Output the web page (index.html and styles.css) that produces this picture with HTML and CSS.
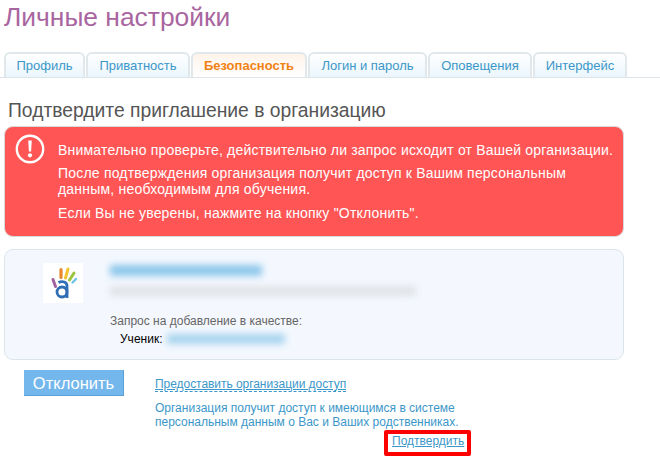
FILE: index.html
```html
<!DOCTYPE html>
<html lang="ru">
<head>
<meta charset="utf-8">
<title>Личные настройки</title>
<link rel="stylesheet" href="styles.css">
</head>
<body>
<h1 class="title">Личные настройки</h1>
<nav class="tabs">
  <a class="tab tab-1">Профиль</a>
  <a class="tab tab-2">Приватность</a>
  <a class="tab tab-3 active">Безопасность</a>
  <a class="tab tab-4">Логин и пароль</a>
  <a class="tab tab-5">Оповещения</a>
  <a class="tab tab-6">Интерфейс</a>
</nav>
<h2 class="heading">Подтвердите приглашение в организацию</h2>
<section class="alert">
  <svg class="alert-icon" width="30" height="30" viewBox="0 0 30 30">
    <circle cx="15" cy="15" r="13.2" fill="none" stroke="#fff" stroke-width="2.4"/>
    <path d="M13.2 6.5h3.6l-.7 11h-2.2z" fill="#fff"/>
    <circle cx="15" cy="21.3" r="2.1" fill="#fff"/>
  </svg>
  <div class="alert-text">
    <p>Внимательно проверьте, действительно ли запрос исходит от Вашей организации.</p>
    <p>После подтверждения организация получит доступ к Вашим персональным<br>данным, необходимым для обучения.</p>
    <p>Если Вы не уверены, нажмите на кнопку "Отклонить".</p>
  </div>
</section>
<section class="card">
  <div class="logo">
    <svg width="40" height="40" viewBox="0 0 40 40">
      <g fill="none" stroke-linecap="round">
        <path d="M10 16.500l2.500 7" stroke="#a1639f" stroke-width="3"/>
        <path d="M18 6.500v8" stroke="#e8882c" stroke-width="3.200"/>
        <path d="M25 6l-2.500 9" stroke="#f2c530" stroke-width="3"/>
        <path d="M31 10l-4.500 7" stroke="#9cc23e" stroke-width="3"/>
        <path d="M33 16l-3.500 3.500" stroke="#6ec1e8" stroke-width="2.400"/>
      </g>
      <g fill="none" stroke="#2f6db5" stroke-width="2.800">
        <circle cx="19" cy="29" r="5"/>
        <path d="M15.500 19.500c4-2 8.500-.5 8.500 3.500v12"/>
      </g>
    </svg>
  </div>
  <div class="card-body">
    <div class="blur blur-name"></div>
    <div class="blur blur-desc"></div>
    <div class="request">Запрос на добавление в качестве:</div>
    <div class="role"><span>Ученик:</span><div class="blur blur-role"></div></div>
  </div>
</section>
<section class="actions">
  <button class="decline">Отклонить</button>
  <div class="grant">
    <a class="grant-link">Предоставить организации доступ</a>
    <p class="grant-text">Организация получит доступ к имеющимся в системе персональным данным о Вас и Ваших родственниках.</p>
    <div class="confirm-row"><span class="highlight"><a class="confirm">Подтвердить</a></span></div>
  </div>
</section>
</body>
</html>
```

FILE: styles.css
```css
* { box-sizing: border-box; }
html, body { margin: 0; padding: 0; }
body {
  width: 660px;
  height: 471px;
  overflow: hidden;
  background: #fff;
  font-family: "Liberation Sans", Arial, sans-serif;
}
.title {
  margin: 0;
  padding: 0 0 0 4px;
  height: 52px;
  font-size: 26.4px;
  line-height: 34px;
  font-weight: normal;
  color: #a9659f;
}
.tabs {
  display: flex;
  gap: 1px;
  padding-left: 4px;
  height: 26px;
  border-bottom: 1px solid #dde5ea;
}
.tab {
  height: 25px;
  border: 2px solid #e1e8ec;
  border-bottom: 0;
  border-radius: 6px 6px 0 0;
  background: linear-gradient(#fff, #eaf6fc);
  font-size: 13px;
  line-height: 24px;
  text-align: center;
  color: #3b97c9;
}
.tab-1 { width: 81px; }
.tab-2 { width: 104px; }
.tab-3 { width: 116px; }
.tab-4 { width: 119px; }
.tab-5 { width: 104px; }
.tab-6 { width: 94px; }
.active {
  background: linear-gradient(#fff3ea, #fff);
  color: #f08214;
  font-weight: bold;
}
.heading {
  margin: 0;
  padding: 20px 0 0 8px;
  height: 48px;
  font-size: 19.3px;
  line-height: 26px;
  font-weight: normal;
  color: #555;
}
.alert {
  display: flex;
  width: 620px;
  height: 111px;
  margin-left: 4px;
  background: #ff5555;
  border: 1px solid #d9d9d9;
  border-radius: 9px;
}
.alert-icon {
  flex: none;
  margin: 7px 0 0 10px;
}
.alert-text {
  padding: 15px 0 0 13px;
  width: 575px;
  font-size: 14px;
  line-height: 16px;
  letter-spacing: .2px;
  color: #fff;
}
.alert-text p { margin: 0 0 7px; }
.alert-text p:last-child { margin-top: 8px; }
.card {
  display: flex;
  width: 620px;
  height: 111px;
  margin: 12px 0 0 4px;
  background: #f4f8fe;
  border: 1px solid #dbe5ea;
  border-radius: 9px;
}
.logo {
  flex: none;
  width: 40px;
  height: 40px;
  margin: 13px 0 0 38px;
  background: #fff;
}
.logo svg { display: block; }
.card-body {
  padding: 15px 0 0 27px;
  font-size: 12px;
}
.blur { filter: blur(3.5px); }
.blur-name {
  width: 152px;
  height: 11px;
  background: #8cc6ea;
}
.blur-desc {
  width: 306px;
  height: 10px;
  margin-top: 10px;
  background: #e0e3e7;
}
.request {
  margin-top: 18px;
  line-height: 14px;
  color: #666;
}
.role {
  display: flex;
  align-items: center;
  gap: 5px;
  margin: 4px 0 0 10px;
  line-height: 14px;
  color: #000;
}
.blur-role {
  width: 118px;
  height: 10px;
  background: #a6d3ee;
}
.actions {
  display: flex;
  padding: 10px 0 0 24px;
}
.decline {
  flex: none;
  width: 100px;
  height: 26px;
  padding: 0;
  background: #74b7ec;
  border: 0;
  border-right: 1px solid #5d9fd3;
  border-bottom: 1px solid #5d9fd3;
  font-family: inherit;
  font-size: 16.5px;
  line-height: 24px;
  color: #fff;
}
.grant {
  width: 316px;
  margin-left: 31px;
  padding-top: 7px;
  font-size: 12px;
  line-height: 14px;
  color: #3b97c9;
}
.grant-link {
  display: inline-block;
  border-bottom: 1px dashed #3b97c9;
  line-height: 13px;
  letter-spacing: -.05px;
  text-decoration: underline;
}
.grant-text {
  margin: 9px 0 0;
  width: 304px;
}
.confirm-row {
  display: flex;
  justify-content: flex-end;
  margin-top: 1px;
}
.highlight {
  display: block;
  width: 87px;
  height: 26px;
  padding: 0 0 0 4px;
  border: 4px solid #f00;
  border-radius: 2px;
}
.confirm { text-decoration: underline; }
```
